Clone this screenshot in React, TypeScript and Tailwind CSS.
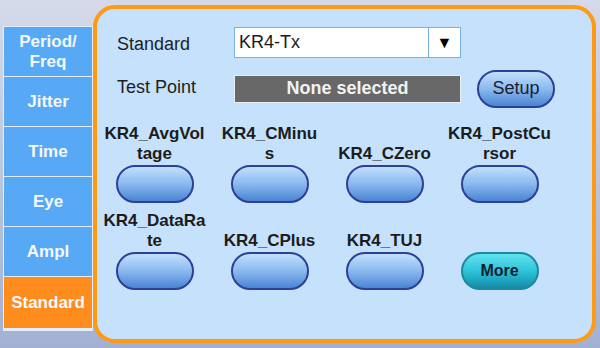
import React from "react";

const tabs = ["Period/\nFreq", "Jitter", "Time", "Eye", "Ampl", "Standard"];

function Pill({ children, more }: { children?: React.ReactNode; more?: boolean }) {
  return (
    <div
      className={
        more
          ? "w-[78px] h-[38px] rounded-[19px] border-2 border-[#1b8aa0] bg-gradient-to-b from-[#5fe3f0] via-[#2cc3d8] to-[#178ca8] flex items-center justify-center text-[16px] font-bold text-[#0b1f33]"
          : "w-[78px] h-[38px] rounded-[19px] border-2 border-[#2d3f98] bg-gradient-to-b from-[#c2e0fd] via-[#8ab9ef] to-[#4a84d3] flex items-center justify-center text-[18px] text-[#1a2030]"
      }
    >
      {children}
    </div>
  );
}

function Cell({ l1, l2, more }: { l1?: string; l2?: string; more?: boolean }) {
  return (
    <div className="flex flex-col items-center">
      <div className="h-[41px] flex flex-col justify-end items-center text-[17px] leading-[20px] font-bold text-[#1c1c1c] whitespace-nowrap">
        {l1 && <div>{l1}</div>}
        {l2 && <div>{l2}</div>}
      </div>
      <div className="mt-[1px]">
        <Pill more={more}>{more ? "More" : null}</Pill>
      </div>
    </div>
  );
}

export default function App() {
  return (
    <div
      className="w-[600px] h-[348px] flex bg-gradient-to-b from-[#d5daea] to-[#a2b1d3] overflow-hidden"
      style={{ fontFamily: '"Liberation Sans", Arial, sans-serif' }}
    >
      <div className="ml-[3px] mt-[26px] w-[90px] h-[305px] flex flex-col border border-[#e4eefa] bg-[#e4eefa] gap-px">
        {tabs.map((t, i) => (
          <div
            key={t}
            className={
              (i === 5 ? "bg-[#ff8d1e] h-[51px]" : "bg-[#57a9f5] h-[49px]") +
              " flex items-center justify-center text-center text-[17px] leading-[20px] font-bold text-[#f4f8ff] whitespace-pre-line"
            }
          >
            {t}
          </div>
        ))}
      </div>
      <div className="mt-[5px] w-[503px] h-[338px] rounded-[22px] border-4 border-[#ff9a14] bg-[#c5e1fb] flex flex-col">
        <div className="pl-[20px] pt-[18px] flex flex-col">
          <div className="flex items-center h-[31px]">
            <div className="w-[117px] text-[18px] text-[#1e1e1e] pt-[3px]">Standard</div>
            <div className="w-[227px] h-[31px] bg-white border border-[#78b0ea] flex">
              <div className="flex-1 flex items-center pl-[4px] text-[18px] text-[#1a1a1a]">KR4-Tx</div>
              <div className="w-[32px] border-l border-[#78b0ea] flex items-center justify-center text-[16px] text-black">▼</div>
            </div>
          </div>
          <div className="flex items-center h-[39px] mt-[11px]">
            <div className="w-[117px] text-[18px] text-[#1e1e1e] self-start pt-[5px]">Test Point</div>
            <div className="w-[227px] h-[28px] bg-[#686868] border border-[#e8eef4] flex items-center justify-center text-[18px] font-bold text-[#f2f2f2]">
              None selected
            </div>
            <div className="ml-[16px]">
              <Pill>Setup</Pill>
            </div>
          </div>
        </div>
        <div className="mt-[15px] grid grid-cols-[115px_115px_115px_115px] gap-y-[7px]">
          <Cell l1="KR4_AvgVol" l2="tage" />
          <Cell l1="KR4_CMinu" l2="s" />
          <Cell l2="KR4_CZero" />
          <Cell l1="KR4_PostCu" l2="rsor" />
          <Cell l1="KR4_DataRa" l2="te" />
          <Cell l2="KR4_CPlus" />
          <Cell l2="KR4_TUJ" />
          <Cell more />
        </div>
      </div>
    </div>
  );
}
